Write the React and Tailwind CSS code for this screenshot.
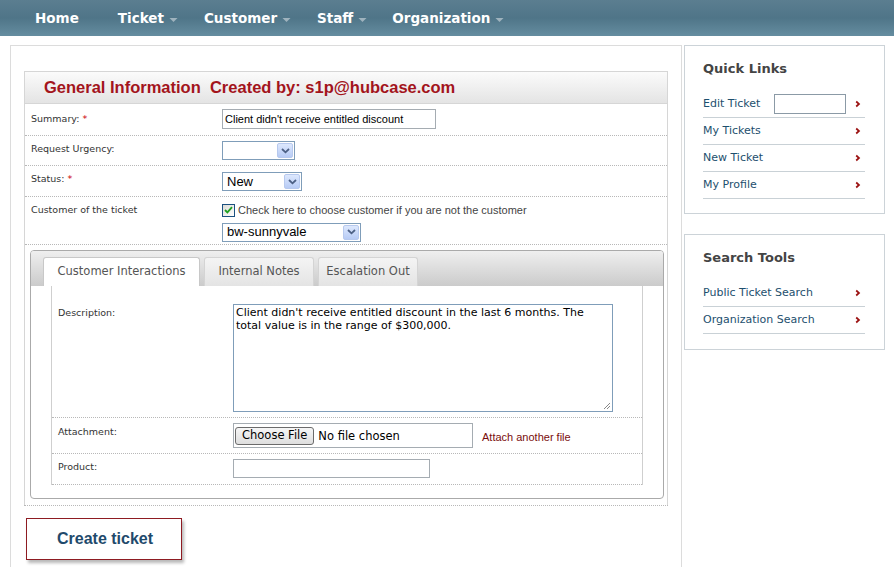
import React from "react";

const Arrow = () => (
  <svg width="6" height="8" viewBox="0 0 6 8" className="shrink-0">
    <path d="M1.2 1.5 L4 4 L1.2 6.5" stroke="#9b1111" strokeWidth="1.7" fill="none" />
  </svg>
);

const NavCaret = () => (
  <svg width="9" height="6" viewBox="0 0 9 6" className="ml-[5px] mt-[3px]">
    <path d="M0.5 1 H8.5 L4.5 5 Z" fill="#9fb3be" />
  </svg>
);

const XpSelect = ({ value, w, h }) => (
  <div className={`flex items-stretch border border-[#7f9db9] bg-white ${w} ${h}`}>
    <div className="flex flex-1 items-center pl-[4px] font-['Liberation_Sans',sans-serif] text-[13px] text-black">
      {value}
    </div>
    <div className="m-[1px] flex w-[16px] items-center justify-center rounded-[2px] border border-[#b7c9ee] bg-gradient-to-b from-[#dde8fd] to-[#b7cbf5]">
      <svg width="9" height="6" viewBox="0 0 9 6">
        <path d="M1 1 L4.5 4.3 L8 1" stroke="#4d6185" strokeWidth="1.8" fill="none" />
      </svg>
    </div>
  </div>
);

const NavItem = ({ label, caret, className }) => (
  <div className={`flex items-center ${className}`}>
    <span className="text-white">{label}</span>
    {caret && <NavCaret />}
  </div>
);

const LinkRow = ({ children }) => (
  <div className="flex h-[27px] items-center justify-between border-b border-[#c9d1d6] pr-[4px]">
    {children}
    <Arrow />
  </div>
);

const Label = ({ children, pt, w }) => (
  <div className={`${w} ${pt} pl-[6px] font-['DejaVu_Sans',sans-serif] text-[9.5px] leading-[14px] text-[#333]`}>
    {children}
  </div>
);

export default function App() {
  return (
    <div className="relative h-[567px] w-[894px] overflow-hidden bg-white">
      {/* Nav bar */}
      <div className="flex h-[36px] items-center bg-gradient-to-b from-[#5b7e90] via-[#4f7588] to-[#658da0] font-['DejaVu_Sans',sans-serif] text-[13.5px] font-bold">
        <NavItem label="Home" className="ml-[35px]" />
        <NavItem label="Ticket" caret className="ml-[39px]" />
        <NavItem label="Customer" caret className="ml-[26px]" />
        <NavItem label="Staff" caret className="ml-[26px]" />
        <NavItem label="Organization" caret className="ml-[25px]" />
      </div>

      <div className="flex">
        {/* Main area */}
        <div className="ml-[10px] mt-[9px] h-[540px] w-[672px] border-l border-r border-t border-[#dcdcdc] pl-[13px] pt-[25px]">
          {/* form box */}
          <div className="w-[644px] border-l border-r border-t border-[#d6d6d6]">
            <div className="flex h-[32px] items-center border-b border-[#d6d6d6] bg-gradient-to-b from-[#fbfbfb] to-[#e4e4e4] pl-[19px] font-['Liberation_Sans',sans-serif] text-[16.5px] font-bold text-[#a3141c]">
              General Information&nbsp;&nbsp;Created by: s1p@hubcase.com
            </div>

            {/* Summary */}
            <div className="flex h-[32px] border-b border-dotted border-[#b8b8b8]">
              <Label w="w-[197px]" pt="pt-[8px]">
                Summary: <span className="text-[#c00]">*</span>
              </Label>
              <div className="pt-[5px]">
                <div className="flex h-[20px] w-[214px] items-center border border-[#a5acb2] pl-[2px] font-['Liberation_Sans',sans-serif] text-[11px] text-black">
                  Client didn't receive entitled discount
                </div>
              </div>
            </div>

            {/* Urgency */}
            <div className="flex h-[30px] border-b border-dotted border-[#b8b8b8]">
              <Label w="w-[197px]" pt="pt-[6px]">Request Urgency:</Label>
              <div className="pt-[5px]">
                <XpSelect value="" w="w-[73px]" h="h-[19px]" />
              </div>
            </div>

            {/* Status */}
            <div className="flex h-[31px] border-b border-dotted border-[#b8b8b8]">
              <Label w="w-[197px]" pt="pt-[6px]">
                Status: <span className="text-[#c00]">*</span>
              </Label>
              <div className="pt-[6px]">
                <XpSelect value="New" w="w-[80px]" h="h-[19px]" />
              </div>
            </div>

            {/* Customer */}
            <div className="flex h-[48px] border-b border-dotted border-[#b8b8b8]">
              <Label w="w-[197px]" pt="pt-[6px]">Customer of the ticket</Label>
              <div className="flex flex-col pt-[5px]">
                <div className="flex items-center">
                  <div className="flex h-[13px] w-[13px] items-center justify-center border border-[#1c5180] bg-gradient-to-br from-[#dcdcd7] to-white">
                    <svg width="9" height="8" viewBox="0 0 9 8">
                      <path d="M1 4 L3.4 6.4 L8 1.2" stroke="#21a121" strokeWidth="1.8" fill="none" />
                    </svg>
                  </div>
                  <span className="ml-[3px] font-['Liberation_Sans',sans-serif] text-[11px] text-[#444]">
                    Check here to choose customer if you are not the customer
                  </span>
                </div>
                <div className="mt-[4px]">
                  <XpSelect value="bw-sunnyvale" w="w-[139px]" h="h-[19px]" />
                </div>
              </div>
            </div>

            {/* Tabs panel */}
            <div className="mb-[6px] ml-[5px] mt-[5px] h-[249px] w-[634px] rounded-[4px] border border-[#aaaaaa] bg-white">
              <div className="flex h-[35px] items-end rounded-t-[3px] bg-gradient-to-b from-[#efefef] to-[#cbcbcb] pl-[12px] font-['DejaVu_Sans',sans-serif] text-[11.5px] text-[#555]">
                <div className="flex h-[29px] w-[157px] items-center justify-center rounded-t-[3px] border-l border-r border-t border-[#c8c8c8] bg-white">
                  Customer Interactions
                </div>
                <div className="ml-[4px] flex h-[29px] w-[110px] items-center justify-center rounded-t-[3px] border-l border-r border-t border-[#d4d4d4] bg-gradient-to-b from-[#f4f4f4] to-[#e4e4e4]">
                  Internal Notes
                </div>
                <div className="ml-[4px] flex h-[29px] w-[100px] items-center justify-center rounded-t-[3px] border-l border-r border-t border-[#d4d4d4] bg-gradient-to-b from-[#f4f4f4] to-[#e4e4e4]">
                  Escalation Out
                </div>
              </div>

              {/* fieldset */}
              <div className="ml-[20px] w-[592px] border-l border-r border-[#cfcfcf]">
                <div className="flex h-[132px] border-b border-dotted border-[#b8b8b8]">
                  <Label w="w-[181px]" pt="pt-[20px]">Description:</Label>
                  <div className="pt-[18px]">
                    <div className="relative h-[108px] w-[380px] border border-[#7f9db9] px-[2px] pt-[1px] font-['DejaVu_Sans',sans-serif] text-[11px] leading-[13px] text-black">
                      Client didn't receive entitled discount in the last 6 months. The
                      <br />
                      total value is in the range of $300,000.
                      <svg width="8" height="8" viewBox="0 0 8 8" className="absolute bottom-[1px] right-[1px]">
                        <path d="M7 1 L1 7 M7 4 L4 7" stroke="#888" strokeWidth="1" />
                      </svg>
                    </div>
                  </div>
                </div>

                <div className="flex h-[36px] border-b border-dotted border-[#b8b8b8]">
                  <Label w="w-[181px]" pt="pt-[7px]">Attachment:</Label>
                  <div className="flex items-start pt-[5px]">
                    <div className="flex h-[25px] w-[240px] items-center border border-[#a5acb2] pl-[1px]">
                      <div className="flex h-[18px] items-center rounded-[3px] border border-[#6b6b6b] bg-gradient-to-b from-[#f6f6f6] to-[#dedede] px-[6px] font-['DejaVu_Sans',sans-serif] text-[11.5px] text-black">
                        Choose File
                      </div>
                      <span className="ml-[4px] mt-[3px] font-['DejaVu_Sans',sans-serif] text-[11.5px] text-black">
                        No file chosen
                      </span>
                    </div>
                    <span className="ml-[9px] mt-[6px] font-['Liberation_Sans',sans-serif] text-[11px] text-[#7a0d0d]">
                      Attach another file
                    </span>
                  </div>
                </div>

                <div className="flex h-[31px] border-b border-dotted border-[#b8b8b8]">
                  <Label w="w-[181px]" pt="pt-[6px]">Product:</Label>
                  <div className="pt-[5px]">
                    <div className="h-[19px] w-[197px] border border-[#a5acb2]" />
                  </div>
                </div>
              </div>
            </div>
            <div className="-ml-px -mr-px border-b border-dotted border-[#b8b8b8]" />
          </div>

          {/* Create button */}
          <div className="ml-[2px] mt-[12px] flex h-[42px] w-[156px] items-center border border-[#8e1b22] bg-white pl-[30px] font-['Liberation_Sans',sans-serif] text-[16px] font-bold text-[#1f4a6c] shadow-[2px_3px_3px_rgba(0,0,0,0.28)]">
            Create ticket
          </div>
        </div>

        {/* Sidebar */}
        <div className="ml-[2px] mt-[9px] w-[201px]">
          <div className="h-[169px] border border-[#ccd3d8] pl-[18px] pt-[13px]">
            <div className="h-[18px] font-['DejaVu_Sans',sans-serif] text-[13px] font-bold text-[#444]">
              Quick Links
            </div>
            <div className="mt-[14px] w-[162px] font-['DejaVu_Sans',sans-serif] text-[11px] text-[#1d4f6e]">
              <LinkRow>
                <div className="flex items-center">
                  <span className="w-[71px]">Edit Ticket</span>
                  <div className="h-[20px] w-[72px] border border-[#8b9aa6]" />
                </div>
              </LinkRow>
              <LinkRow>
                <span>My Tickets</span>
              </LinkRow>
              <LinkRow>
                <span>New Ticket</span>
              </LinkRow>
              <LinkRow>
                <span>My Profile</span>
              </LinkRow>
            </div>
          </div>

          <div className="mt-[20px] h-[116px] border border-[#ccd3d8] pl-[18px] pt-[13px]">
            <div className="h-[18px] font-['DejaVu_Sans',sans-serif] text-[13px] font-bold text-[#444]">
              Search Tools
            </div>
            <div className="mt-[14px] w-[162px] font-['DejaVu_Sans',sans-serif] text-[11px] text-[#1d4f6e]">
              <LinkRow>
                <span>Public Ticket Search</span>
              </LinkRow>
              <LinkRow>
                <span>Organization Search</span>
              </LinkRow>
            </div>
          </div>
        </div>
      </div>
    </div>
  );
}
